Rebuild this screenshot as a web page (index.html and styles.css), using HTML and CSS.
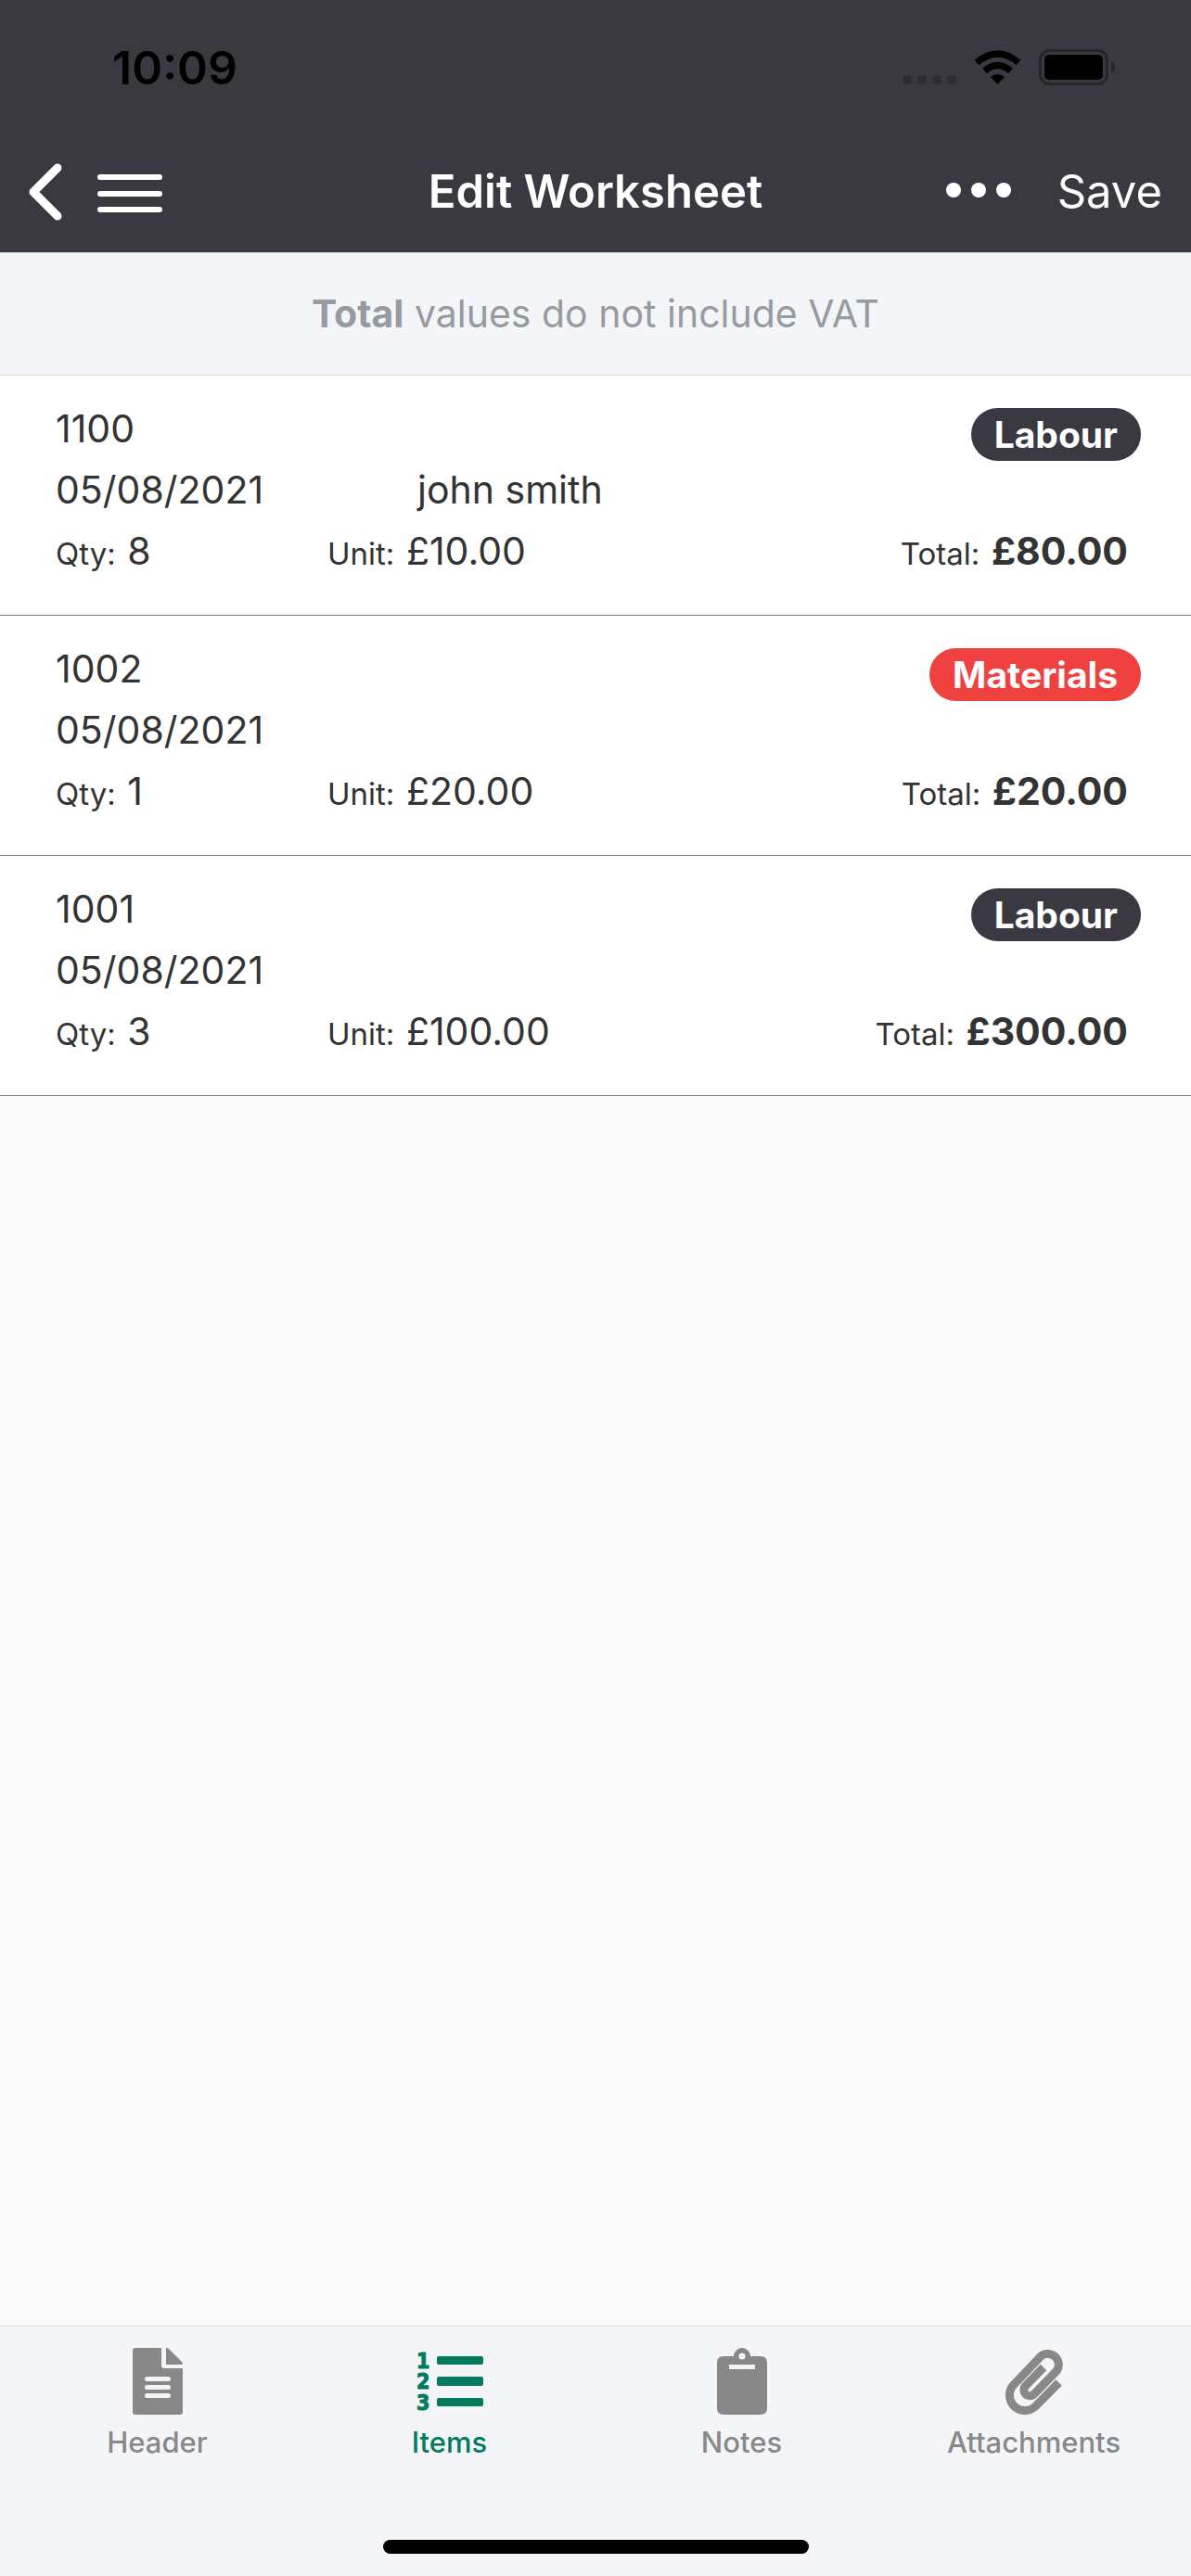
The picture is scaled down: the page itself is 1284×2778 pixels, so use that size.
FILE: index.html
```html
<!DOCTYPE html>
<html lang="en">
<head>
<meta charset="utf-8">
<meta name="viewport" content="width=device-width, initial-scale=1">
<title>Edit Worksheet</title>
<link rel="stylesheet" href="styles.css">
</head>
<body class="app">
<header class="top">
  <div class="status">
    <span class="clock">10:09</span>
    <svg class="status-icons" width="232" height="42" viewBox="0 0 232 42" aria-hidden="true">
      <g fill="#2e2d33">
        <rect x="3" y="29" width="10" height="10" rx="3"/><rect x="19" y="29" width="10" height="10" rx="3"/><rect x="35" y="29" width="10" height="10" rx="3"/><rect x="51" y="29" width="10" height="10" rx="3"/>
      </g>
      <path d="M105.500 39l-7.500-8q7.500-6 15 0z"/>
      <path d="M91.500 24.500q14-12 28 0M83 15.500q22.500-19 45 0" fill="none" stroke="#000" stroke-width="7"/>
      <rect x="151.500" y="2.500" width="72" height="36" rx="10" fill="none" stroke="#26252b" stroke-width="3"/>
      <rect x="156" y="7" width="63" height="27" rx="5"/>
      <path d="M228 14q4 2 4 6.500t-4 6.500z" fill="#26252b"/>
    </svg>
  </div>
  <div class="toolbar">
    <div class="side">
      <button class="icon-button" type="button" aria-label="Back">
        <svg width="36" height="62" viewBox="0 0 36 62"><path d="M31 5L5 31l26 26" fill="none" stroke="#fff" stroke-width="9" stroke-linecap="round" stroke-linejoin="round"/></svg>
      </button>
      <button class="icon-button" type="button" aria-label="Menu">
        <svg width="70" height="46" viewBox="0 0 70 46"><path d="M3 7h64M3 25h64M3 42h64" stroke="#fff" stroke-width="6" stroke-linecap="round"/></svg>
      </button>
    </div>
    <h1 class="title">Edit Worksheet</h1>
    <div class="side side-end">
      <button class="icon-button" type="button" aria-label="More">
        <svg width="70" height="20" viewBox="0 0 70 20" fill="#fff"><circle cx="8" cy="8" r="8"/><circle cx="35" cy="8" r="8"/><circle cx="62" cy="8" r="8"/></svg>
      </button>
      <button class="save" type="button">Save</button>
    </div>
  </div>
</header>
<main class="content">
  <p class="notice"><strong>Total</strong> values do not include VAT</p>
  <ul class="items">
    <li class="item">
      <div class="line"><span>1100</span><span class="badge">Labour</span></div>
      <div class="line"><span class="date">05/08/2021</span><span>john smith</span></div>
      <div class="line"><span class="qty"><small>Qty:</small> 8</span><span><small>Unit:</small> £10.00</span><span class="total"><small>Total:</small> <b>£80.00</b></span></div>
    </li>
    <li class="item">
      <div class="line"><span>1002</span><span class="badge badge-red">Materials</span></div>
      <div class="line"><span class="date">05/08/2021</span></div>
      <div class="line"><span class="qty"><small>Qty:</small> 1</span><span><small>Unit:</small> £20.00</span><span class="total"><small>Total:</small> <b>£20.00</b></span></div>
    </li>
    <li class="item">
      <div class="line"><span>1001</span><span class="badge">Labour</span></div>
      <div class="line"><span class="date">05/08/2021</span></div>
      <div class="line"><span class="qty"><small>Qty:</small> 3</span><span><small>Unit:</small> £100.00</span><span class="total"><small>Total:</small> <b>£300.00</b></span></div>
    </li>
  </ul>
</main>
<footer class="bottom">
  <nav class="tabs">
    <a class="tab" href="#header">
      <svg width="54" height="72" viewBox="0 0 54 72" fill="currentColor"><path fill-rule="evenodd" d="M3 0h28v19q0 3 3 3h20v47q0 3-3 3H3q-3 0-3-3V3q0-3 3-3zM36 0q2 0 3 1l14 14q1 1 1 3H36zM15.500 31a2.500 2.500 0 0 0 0 5h23a2.500 2.500 0 0 0 0-5zM15.500 40a2.500 2.500 0 0 0 0 5h23a2.500 2.500 0 0 0 0-5zM15.500 49a2.500 2.500 0 0 0 0 5h23a2.500 2.500 0 0 0 0-5z"/></svg>
      Header
    </a>
    <a class="tab tab-active" href="#items" aria-current="page">
      <svg width="72" height="72" viewBox="0 0 72 72" fill="currentColor"><g class="numerals"><text x="0" y="22">1</text><text x="0" y="44">2</text><text x="0" y="67">3</text></g><rect x="22" y="9" width="50" height="9" rx="2"/><rect x="22" y="31" width="50" height="10" rx="2"/><rect x="22" y="54" width="50" height="9" rx="2"/></svg>
      Items
    </a>
    <a class="tab" href="#notes">
      <svg width="54" height="72" viewBox="0 0 54 72" fill="currentColor"><path fill-rule="evenodd" d="M7 9h11a9 9 0 0 1 18 0h11q7 0 7 7v49q0 7-7 7H7q-7 0-7-7V16q0-7 7-7zM27 5.500a3.500 3.500 0 0 0 0 7 3.500 3.500 0 0 0 0-7zM14 18q-1 0-1 1v3q0 1 1 1h26q1 0 1-1v-3q0-1-1-1z"/></svg>
      Notes
    </a>
    <a class="tab" href="#attachments">
      <svg width="72" height="72" viewBox="0 0 72 72"><path d="M62.500 37.500L37.700 62.700A16.500 16.500 0 0 1 14.300 39.300L43.700 8.500A11.800 11.800 0 0 1 60.300 24.700L35.300 50.500A6.500 6.500 0 0 1 26.100 41.500L46 21" fill="none" stroke="currentColor" stroke-width="9"/></svg>
      Attachments
    </a>
  </nav>
  <div class="home-bar"></div>
</footer>
</body>
</html>
```
FILE: styles.css
```css
* { box-sizing: border-box; }

.app {
  margin: 0;
  min-height: 100vh;
  display: flex;
  flex-direction: column;
  background: #fafafa;
  color: #333;
  font-family: Inter, "Liberation Sans", sans-serif;
  font-size: 41px;
}

.top { background: #3a3942; }

.status {
  display: flex;
  justify-content: space-between;
  align-items: center;
  height: 144px;
  padding: 2px 82px 0 121px;
  color: #000;
}

.clock { font-size: 50px; font-weight: 600; }

.toolbar {
  display: flex;
  align-items: center;
  height: 128px;
  padding: 0 31px 3px;
  color: #fff;
}

.side {
  flex: 1;
  display: flex;
  align-items: center;
  gap: 38px;
}

.side-end { justify-content: flex-end; gap: 50px; }

.icon-button,
.save {
  padding: 0;
  border: 0;
  background: none;
  color: inherit;
  font: inherit;
}

.icon-button svg,
.tab svg { display: block; }

.save { font-size: 49px; }

.title { margin: 0; font-size: 49px; font-weight: 600; }

.content { flex: 1; }

.notice {
  margin: 0;
  padding: 36px 24px;
  border: solid #d7d8da;
  border-width: 1px 0;
  background: #f4f5f8;
  color: #989aa2;
  line-height: 59px;
  text-align: center;
}

.items { margin: 0; padding: 0; list-style: none; }

.item {
  padding: 24px 54px 36px 60px;
  border-bottom: 1px solid #7a7a7c;
  background: #fff;
}

.line {
  display: flex;
  height: 66px;
  line-height: 66px;
}

.line small { margin-right: 1px; font-size: 33px; }

.date { width: 390px; }

.qty { width: 293px; }

.total { margin-left: auto; padding-right: 14px; }

.badge {
  height: 57px;
  margin: 11px 0 0 auto;
  padding: 0 25px;
  border-radius: 29px;
  background: #3a3942;
  color: #fff;
  font-size: 39px;
  font-weight: 700;
  line-height: 57px;
}

.badge-red { background: #f04141; }

.bottom {
  padding: 23px 12px 24px;
  border-top: 1px solid #d7d8da;
  background: #f4f5f8;
}

.tabs { display: grid; grid-template-columns: repeat(4, 1fr); }

.tab {
  display: flex;
  flex-direction: column;
  align-items: center;
  gap: 12px;
  color: #888;
  font-size: 31px;
  font-weight: 500;
  line-height: 36px;
  text-decoration: none;
}

.tab-active { color: #027b5e; }

.numerals {
  font-family: "DejaVu Sans Condensed", "DejaVu Sans", sans-serif;
  font-size: 23px;
  font-weight: 700;
  stroke: currentColor;
  stroke-width: 1px;
}

.home-bar {
  width: 459px;
  height: 15px;
  margin: 87px auto 0;
  border-radius: 8px;
  background: #000;
}
```
